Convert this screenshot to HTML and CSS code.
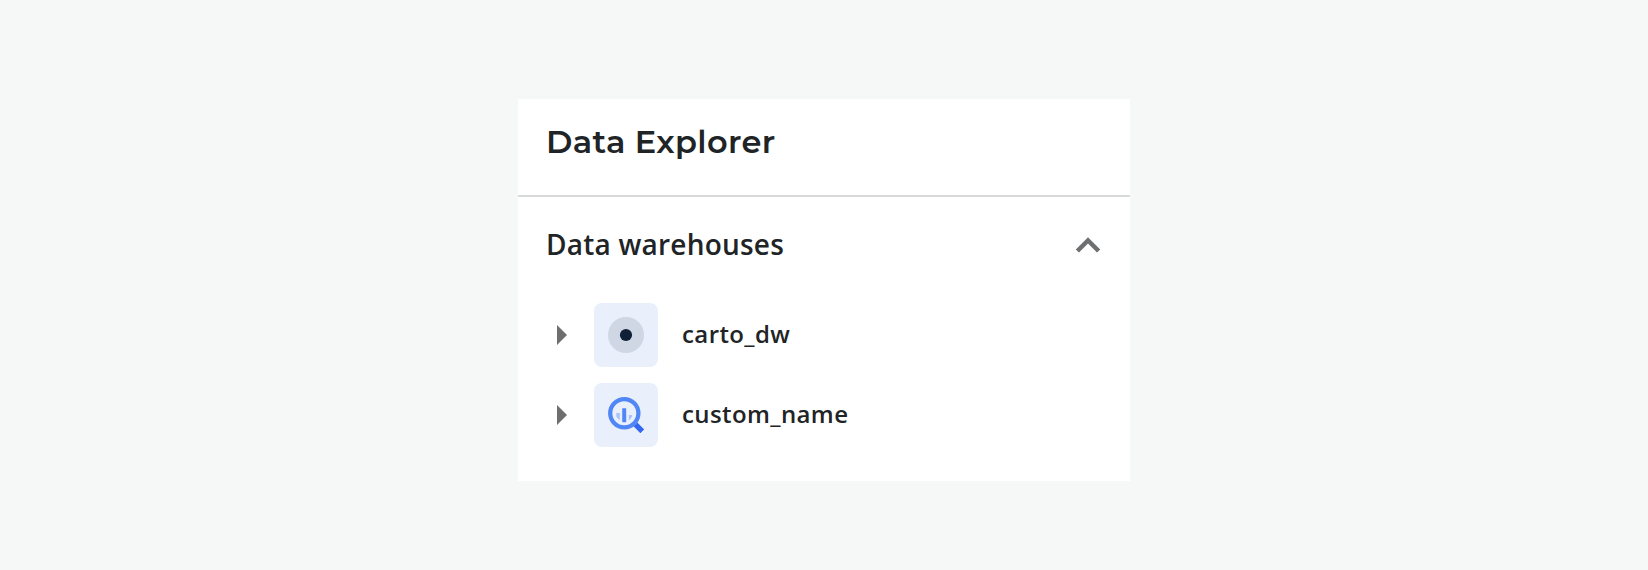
FILE: index.html
```html
<!DOCTYPE html>
<html lang="en">
<head>
<meta charset="utf-8">
<title>Data Explorer</title>
<link rel="stylesheet" href="styles.css">
</head>
<body>
<main class="panel">
  <header class="panel-header"><h1 class="title">Data Explorer</h1></header>
  <section class="warehouses">
    <div class="section-header">
      <h2 class="section-title">Data warehouses</h2>
      <svg class="chevron" viewBox="0 0 24 24"><path d="M12 7.6l-6.1 6.1 1.6 1.6L12 10.8l4.5 4.5 1.6-1.6z"/></svg>
    </div>
    <ul class="list">
      <li class="row">
        <svg class="arrow" viewBox="0 0 10 20"><path d="M0 0l10 10L0 20z"/></svg>
        <span class="tile">
          <svg class="icon" viewBox="0 0 36 36"><circle cx="18" cy="18" r="18" fill="#d0d7e4"/><circle cx="18" cy="18" r="6.1" fill="#0f2037"/></svg>
        </span>
        <span class="name">carto_dw</span>
      </li>
      <li class="row">
        <svg class="arrow" viewBox="0 0 10 20"><path d="M0 0l10 10L0 20z"/></svg>
        <span class="tile">
          <svg class="icon" viewBox="0 0 36 36">
            <path d="M29.3 25.5L36.2 32.4L32.4 36.2L25.5 29.3z" fill="#3367ef"/>
            <circle cx="16.3" cy="16.3" r="14.1" fill="none" stroke="#5087f5" stroke-width="4.3"/>
            <path d="M8.3 16H11.8V23.2Q9.7 21.9 8.3 19.6zM20.8 18H24.1V19.6Q22.8 21.9 20.8 23.2z" fill="#a9c4fa"/>
            <path d="M14.2 11.2h4V25q-2 .4-4 0z" fill="#5087f5"/>
          </svg>
        </span>
        <span class="name">custom_name</span>
      </li>
    </ul>
  </section>
</main>
</body>
</html>
```
FILE: styles.css
```css
* { box-sizing: border-box; margin: 0; padding: 0; }
body {
  min-height: 570px;
  padding-top: 99px;
  background: #f5f8f7;
  color: #212426;
  font-family: "Open Sans", sans-serif;
}
.panel { width: 612px; height: 382px; margin: 0 auto; background: #fff; }
.panel-header { height: 98px; padding: 23px 28px 0; border-bottom: 2px solid #d8d9d9; }
.title {
  font: 600 32px/40px Montserrat, Inter, sans-serif;
  letter-spacing: 0.36px;
  white-space: nowrap;
}
.section-header {
  display: flex;
  align-items: center;
  justify-content: space-between;
  height: 98px;
  padding: 0 18px 0 28px;
}
.section-title {
  padding-bottom: 4px;
  font-size: 28px;
  font-weight: 600;
  line-height: 40px;
  letter-spacing: 0.22px;
  white-space: nowrap;
}
.chevron { width: 48px; height: 48px; fill: #6d6f71; }
.list { display: flex; flex-direction: column; gap: 16px; padding: 8px 28px 0 39px; list-style: none; }
.row { display: flex; align-items: center; height: 64px; }
.arrow { width: 10px; height: 20px; margin-right: 27px; fill: #6d6f71; }
.tile {
  display: flex;
  align-items: center;
  justify-content: center;
  width: 64px;
  height: 64px;
  margin-right: 24px;
  border-radius: 8px;
  background: #e9f0fc;
}
.icon { width: 36px; height: 36px; }
.name { padding-bottom: 2px; font-size: 24px; font-weight: 600; line-height: 36px; letter-spacing: 0.4px; }
```
